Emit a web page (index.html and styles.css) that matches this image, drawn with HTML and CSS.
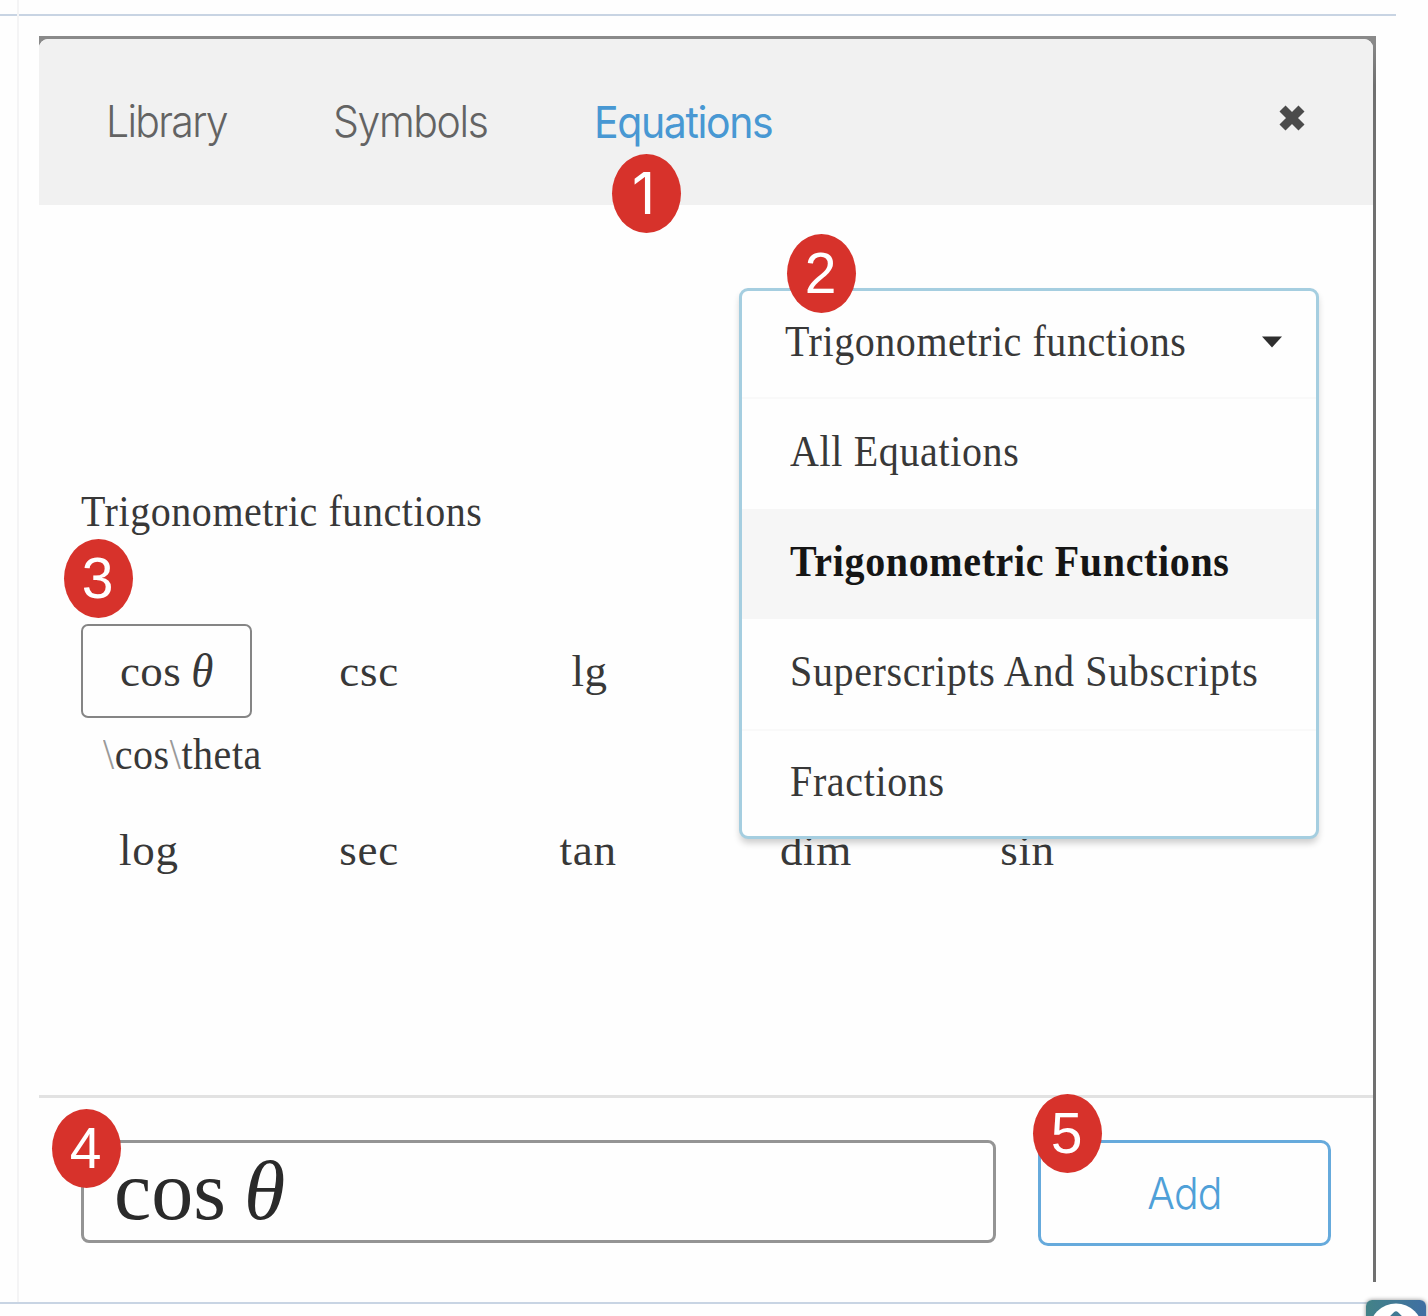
FILE: index.html
```html
<!DOCTYPE html>
<html lang="en">
<head>
<meta charset="utf-8">
<title>Equation editor</title>
<link rel="stylesheet" href="styles.css">
</head>
<body>
<main class="page">
  <div class="page-cell">
    <div class="shot">
      <section class="dialog">
        <header class="tabs">
          <span class="tab tab-library">Library</span>
          <span class="tab tab-symbols">Symbols</span>
          <span class="tab tab-equations active">Equations</span>
          <svg class="close" viewBox="0 0 28 28"><path d="M4.500 4.500 23.500 23.500M23.500 4.500 4.500 23.500"/></svg>
        </header>
        <div class="content">
          <h2 class="heading"><span class="label">Trigonometric functions</span></h2>
          <div class="grid row-one">
            <div class="selected"><span>cos</span><i>θ</i></div>
            <span class="fn">csc</span>
            <span class="fn narrow">lg</span>
          </div>
          <div class="latex"><span class="label"><span class="slash">\</span>cos<span class="slash">\</span>theta</span></div>
          <div class="grid row-two">
            <span class="fn">log</span>
            <span class="fn">sec</span>
            <span class="fn">tan</span>
            <span class="fn">dim</span>
            <span class="fn">sin</span>
          </div>
        </div>
        <footer class="footer">
          <div class="input"><span>cos</span><i>θ</i></div>
          <div class="add"><span>Add</span></div>
        </footer>
      </section>
      <div class="dropdown">
        <div class="current"><span class="label">Trigonometric functions</span><svg class="caret" viewBox="0 0 22 12"><path d="M1 .5h20L11 11.5z"/></svg></div>
        <div class="menu">
          <div class="item"><span class="label">All Equations</span></div>
          <div class="item chosen"><span class="label">Trigonometric Functions</span></div>
          <div class="item"><span class="label">Superscripts And Subscripts</span></div>
          <div class="item ruled"><span class="label">Fractions</span></div>
        </div>
      </div>
      <b class="badge badge-1">1</b>
      <b class="badge badge-2">2</b>
      <b class="badge badge-3">3</b>
      <b class="badge badge-4">4</b>
      <b class="badge badge-5">5</b>
    </div>
  </div>
</main>
<div class="to-top">
  <svg viewBox="0 0 60 60"><circle cx="30" cy="30" r="26.5"/><path d="M17 27 30 14.500 43 27M30 15v32"/></svg>
</div>
</body>
</html>
```
FILE: styles.css
```css
* { box-sizing: border-box; }
body {
  margin: 0;
  width: 1428px;
  height: 1316px;
  overflow: hidden;
  position: relative;
  background: #fefefe;
  color: #383838;
  font-family: "Liberation Serif", serif;
}
.page {
  width: 1396px;
  height: 1304px;
  padding-top: 14px;
  border-bottom: 2px solid #c8d4e3;
  position: relative;
}
.page::before {
  content: "";
  position: absolute;
  left: 17px;
  top: 0;
  bottom: 0;
  width: 2px;
  background: #f4f4f5;
}
.page-cell {
  border-top: 2px solid #c8d4e3;
  padding: 20px 20px 20px 39px;
}
.shot {
  position: relative;
  width: 1337px;
  height: 1246px;
  padding: 3px 3px 0 0;
  background: linear-gradient(#8a8a8a 0, #8a8a8a 4px, #707070 50px);
}
.dialog {
  display: flex;
  flex-direction: column;
  height: 1243px;
  border-radius: 9px 9px 0 0;
  background: #fefefe;
  overflow: hidden;
}
.tabs {
  display: flex;
  height: 166px;
  padding-left: 67px;
  background: #f1f1f1;
  font: 300 41px/50px Inter, "Liberation Sans", sans-serif;
  color: #636363;
}
.tab {
  display: block;
  margin-top: 59px;
  transform: scaleY(1.08);
  transform-origin: 0 50%;
  letter-spacing: -1.700px;
  white-space: nowrap;
}
.tab-library { width: 227px; }
.tab-symbols { width: 261px; letter-spacing: -1.400px; }
.tab-equations { width: 684px; }
.active { color: #4898d3; font-weight: 400; margin-top: 60px; letter-spacing: -1.400px; }
.close { width: 28px; height: 28px; margin-top: 65px; }
.close path { stroke: #4b4b4b; stroke-width: 8.5; stroke-linecap: butt; }
.content { height: 890px; padding-left: 42px; }
.heading { margin: 0; padding-top: 282px; font-weight: 400; height: 419px; }
.label {
  display: inline-block;
  font-size: 40px;
  line-height: 50px;
  letter-spacing: .56px;
  transform: scaleY(1.1);
  white-space: nowrap;
}
.grid { display: grid; grid-template-columns: repeat(5, 220.3px); }
.row-one { height: 94px; align-items: center; }
.selected {
  display: flex;
  align-items: center;
  gap: 10px;
  width: 171px;
  height: 94px;
  padding-left: 37px;
  border: 2.500px solid #858585;
  border-radius: 7px;
  font-size: 45px;
  line-height: 50px;
  letter-spacing: .4px;
}
.selected i { transform: scaleY(1.08); }
.fn {
  width: 60px;
  margin-left: 38px;
  font-size: 45px;
  line-height: 50px;
  letter-spacing: .7px;
}
.narrow { text-align: center; }
.latex { padding: 12px 0 0 22px; height: 107px; }
.slash { color: #999; }
.row-two { height: 50px; }
.footer {
  display: flex;
  gap: 42px;
  flex: 1;
  border-top: 3px solid #e2e2e2;
  padding: 42px 0 0 42px;
}
.input {
  display: flex;
  align-items: center;
  gap: 18px;
  width: 915px;
  height: 103px;
  padding: 0 0 2px 30px;
  border: 3px solid #949494;
  border-radius: 8px;
  font-size: 84px;
  line-height: 90px;
  color: #2a2a2a;
}
.add {
  display: flex;
  justify-content: center;
  align-items: center;
  width: 293px;
  height: 106px;
  padding-bottom: 1px;
  border: 3px solid #66aadc;
  border-radius: 10px;
  font: 300 41px/50px Inter, "Liberation Sans", sans-serif;
  letter-spacing: -.8px;
  color: #4fa0d8;
}
.add span { transform: scaleY(1.08); }
.dropdown {
  position: absolute;
  left: 700px;
  top: 252px;
  width: 580px;
  height: 551px;
  border: 3px solid #a5cee0;
  border-radius: 9px;
  background: #fefefe;
  box-shadow: 0 5px 7px -1px rgba(0, 0, 0, .2);
}
.current {
  display: flex;
  justify-content: space-between;
  align-items: center;
  height: 108px;
  padding: 0 33px 4px 43px;
  border-bottom: 2px solid #f9f9f9;
}
.caret { width: 22px; height: 12px; fill: #2e2e2e; }
.item {
  display: flex;
  align-items: center;
  height: 110px;
  padding: 0 0 4px 48px;
}
.item .label { letter-spacing: .64px; }
.item:last-child { height: 107px; padding-bottom: 3px; }
.chosen { background: #f6f6f6; color: #151515; font-weight: 700; }
.ruled { border-top: 2px solid #f9f9f9; }
.badge {
  position: absolute;
  width: 69px;
  height: 79px;
  padding-right: 2px;
  border-radius: 50%;
  background: #d7322b;
  color: #fff;
  font: 400 57px/79px "Liberation Sans", sans-serif;
  text-align: center;
}
.badge-1 { left: 573px; top: 118px; padding-right: 6px; font-family: Inter, "Liberation Sans", sans-serif; }
.badge-2 { left: 748px; top: 198px; }
.badge-3 { left: 25px; top: 503px; }
.badge-4 { left: 13px; top: 1073px; }
.badge-5 { left: 994px; top: 1058px; }
.to-top {
  position: absolute;
  left: 1366px;
  top: 1300px;
  width: 60px;
  height: 60px;
  border-radius: 6px;
  background: linear-gradient(90deg, #438287, #3f6fa3);
  box-shadow: 0 0 4px rgba(0, 0, 0, .45);
}
.to-top svg { display: block; }
.to-top circle { fill: #fff; }
.to-top path { fill: none; stroke: #417a94; stroke-width: 6; stroke-linecap: round; stroke-linejoin: round; }
```
